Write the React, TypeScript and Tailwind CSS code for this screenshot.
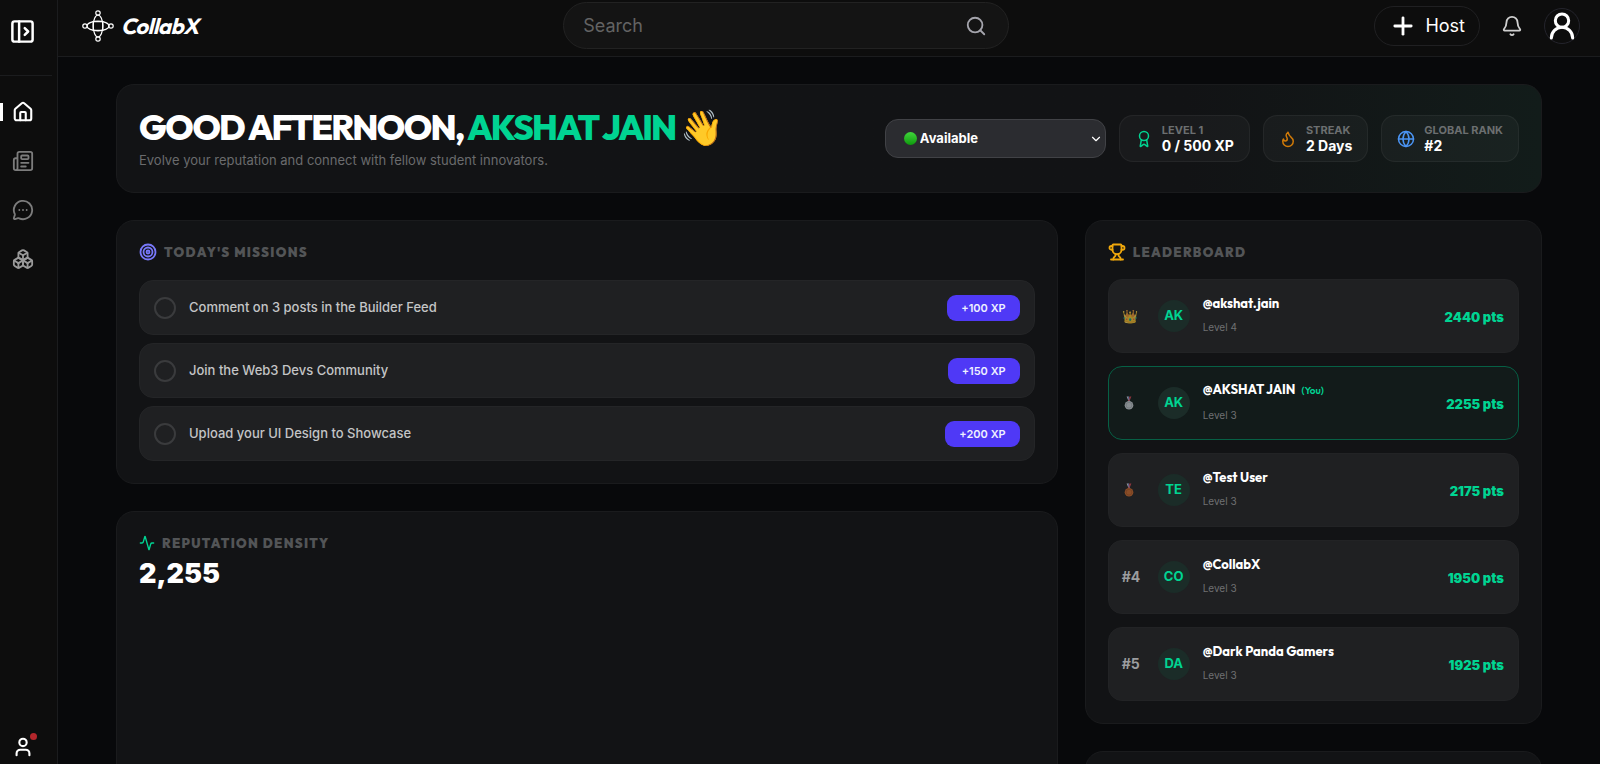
import type { ReactNode } from "react";
import {
  Activity,
  Award,
  Bell,
  Boxes,
  ChevronDown,
  Flame,
  Globe,
  House,
  MessageCircleMore,
  Newspaper,
  PanelLeftOpen,
  Plus,
  Search,
  Target,
  Trophy,
  User,
  UserRound,
} from "lucide-react";

const display = "font-['Outfit','Lato',sans-serif]";

const missions = [
  { id: "comment", title: "Comment on 3 posts in the Builder Feed", xp: 100 },
  { id: "join", title: "Join the Web3 Devs Community", xp: 150 },
  { id: "upload", title: "Upload your UI Design to Showcase", xp: 200 },
];

const leaders = [
  { rank: 1, initials: "AK", name: "akshat.jain", level: 4, points: 2440 },
  { rank: 2, initials: "AK", name: "AKSHAT JAIN", level: 3, points: 2255, you: true },
  { rank: 3, initials: "TE", name: "Test User", level: 3, points: 2175 },
  { rank: 4, initials: "CO", name: "CollabX", level: 3, points: 1950 },
  { rank: 5, initials: "DA", name: "Dark Panda Gamers", level: 3, points: 1925 },
];

function Logo() {
  return (
    <svg viewBox="0 0 32 32" className="size-8" fill="none" stroke="currentColor" strokeWidth="1.2">
      <ellipse cx="16" cy="16" rx="11" ry="4.8" />
      <ellipse cx="16" cy="16" rx="4.8" ry="11" />
      <path d="M11.2 11.7h9.6v8.6h-9.6z" />
      <circle cx="16" cy="3" r="2.2" />
      <circle cx="16" cy="29" r="2.2" />
      <circle cx="3" cy="16" r="2.2" />
      <circle cx="29" cy="16" r="2.2" />
    </svg>
  );
}

function Medal({ color, label }: { color: string; label: string }) {
  return (
    <svg viewBox="0 0 14 14" className="size-[14px] opacity-70" role="img" aria-label={label}>
      <path d="M4.6 0.5h2L8 5.2H6.6z" fill="#c9ccd6" />
      <path d="M9.4 0.5h-2L6 5.2h1.4z" fill="#c5414d" />
      <path d="M5.8 0.5h.8l1 3.2-.4 1.2z" fill="#5c74b8" />
      <circle cx="7" cy="9.2" r="4.3" fill={color} />
      <circle cx="7" cy="9.2" r="2.9" fill="none" stroke="#00000033" strokeWidth="0.7" />
    </svg>
  );
}

function Rank({ rank }: { rank: number }) {
  if (rank === 1) return <span className="text-[13px] opacity-60">👑</span>;
  if (rank === 2) return <Medal color="#b9bec4" label="Silver" />;
  if (rank === 3) return <Medal color="#b8602a" label="Bronze" />;
  return <>#{rank}</>;
}

function Card({ children, className = "" }: { children?: ReactNode; className?: string }) {
  return (
    <section className={`rounded-[18px] border border-[#1a1b1d] bg-[#121315] p-[22px] ${className}`}>
      {children}
    </section>
  );
}

function CardTitle({ icon, children }: { icon: ReactNode; children: ReactNode }) {
  return (
    <h2 className={`flex h-[18px] items-center gap-[7px] text-[13px] leading-5 font-black tracking-widest text-[#535557] uppercase ${display}`}>
      {icon}
      {children}
    </h2>
  );
}

function Stat({ icon, label, value }: { icon: ReactNode; label: string; value: string }) {
  return (
    <div className="flex h-[47px] items-center gap-[9px] rounded-[14px] border border-white/5 bg-white/3 px-[15px]">
      {icon}
      <div>
        <p className="text-[11px] leading-[14px] font-bold text-[#6c6f70]">{label}</p>
        <p className="text-sm leading-[18px] font-bold text-white">{value}</p>
      </div>
    </div>
  );
}

function Sidebar() {
  return (
    <aside className="flex w-[58px] shrink-0 flex-col border-r border-[#1b1c1e] bg-[#0d0d0d]">
      <div className="mr-[5px] flex h-[76px] shrink-0 items-start border-b border-[#1b1c1e] pt-[18px] pl-[9px]">
        <button aria-label="Open sidebar" className="text-white">
          <PanelLeftOpen size={27} strokeWidth={2.2} />
        </button>
      </div>
      <nav className="mt-[27px] flex flex-col gap-[31px]">
        <a href="#home" aria-label="Home" className="flex h-[18px] items-center border-l-3 border-white pl-[9px] text-white">
          <House size={22} strokeWidth={2.3} />
        </a>
        <a href="#feed" aria-label="Feed" className="flex h-[18px] items-center pl-3 text-[#7c7c7c]">
          <Newspaper size={22} />
        </a>
        <a href="#messages" aria-label="Messages" className="flex h-[18px] items-center pl-3 text-[#7c7c7c]">
          <MessageCircleMore size={22} />
        </a>
        <a href="#communities" aria-label="Communities" className="flex h-[18px] items-center pl-3 text-[#9a9a9a]">
          <Boxes size={22} />
        </a>
      </nav>
      <a href="#profile" aria-label="Profile" className="relative mt-auto mb-[6px] ml-3 w-[22px] text-white">
        <User size={22} strokeWidth={2.3} />
        <span className="absolute -top-[3px] -right-[3px] size-[7px] rounded-full bg-[#b3262b]" />
      </a>
    </aside>
  );
}

function TopBar() {
  return (
    <header className="flex h-[57px] shrink-0 items-start justify-between border-b border-[#1b1c1e] bg-[#0d0d0d] pr-5 pl-6">
      <a href="#home" className="flex items-center gap-[7px] pt-[10px] text-white">
        <Logo />
        <span className={`text-[22px] leading-8 font-bold tracking-tight italic ${display}`}>CollabX</span>
      </a>
      <label className="mt-[2px] flex h-[47px] w-[446px] items-center rounded-full border border-[#222] bg-[#141414] pr-[21px] pl-[19px]">
        <input
          type="search"
          placeholder="Search"
          aria-label="Search"
          className="min-w-0 flex-1 bg-transparent text-lg text-white outline-none placeholder:text-[#636363]"
        />
        <Search size={22} className="text-[#a4a4ac]" />
      </label>
      <div className="flex items-center gap-[21px] pt-[6px]">
        <button className="flex h-10 items-center gap-2 rounded-full border border-[#202022] pr-[14px] pl-[14px] text-lg text-white">
          <Plus size={28} strokeWidth={2.4} />
          Host
        </button>
        <button aria-label="Notifications" className="text-[#cfcfcf]">
          <Bell size={22} />
        </button>
        <button
          aria-label="Account"
          className="flex size-9 items-center justify-center rounded-full border border-[#24242c] text-white"
        >
          <UserRound size={32} strokeWidth={2.3} className="shrink-0" />
        </button>
      </div>
    </header>
  );
}

function Greeting() {
  return (
    <Card className="flex items-center justify-between bg-linear-to-r from-[#121315] from-75% to-[#121c1a]">
      <div>
        <h1 className={`text-[35px] leading-[41px] font-extrabold tracking-tighter text-white ${display}`}>
          GOOD AFTERNOON, <span className="text-[#00d492]">AKSHAT JAIN</span> 👋
        </h1>
        <p className="mt-[3px] text-[13px] leading-[19px] text-[#6a6b6d]">
          Evolve your reputation and connect with fellow student innovators.
        </p>
      </div>
      <div className="flex items-center gap-[13px]">
        <div className="relative">
          <select
            aria-label="Status"
            defaultValue="available"
            className="h-[39px] w-[221px] appearance-none rounded-[13px] border border-[#414246] bg-[#2b2c30] pl-[34px] text-[13px] font-bold text-white"
          >
            <option value="available">Available</option>
            <option value="busy">Busy</option>
          </select>
          <span className="pointer-events-none absolute top-[13px] left-[19px] size-[13px] rounded-full bg-linear-to-b from-[#3fd63a] to-[#0a9a0a]" />
          <ChevronDown size={14} className="pointer-events-none absolute top-[13px] right-[3px] text-white" />
        </div>
        <Stat icon={<Award size={18} className="text-[#00d492]" />} label="LEVEL 1" value="0 / 500 XP" />
        <Stat icon={<Flame size={18} className="text-[#d07a08]" />} label="STREAK" value="2 Days" />
        <Stat icon={<Globe size={18} className="text-[#4b95f5]" />} label="GLOBAL RANK" value="#2" />
      </div>
    </Card>
  );
}

function Missions() {
  return (
    <Card>
      <CardTitle icon={<Target size={18} strokeWidth={2.4} className="text-[#7878fa]" />}>Today's Missions</CardTitle>
      <ul className="mt-[19px] space-y-2">
        {missions.map((m) => (
          <li key={m.id} className="flex h-[55px] items-center rounded-[14px] border border-[#242527] bg-[#1f2022] px-[14px]">
            <input
              id={m.id}
              type="checkbox"
              className="size-[22px] appearance-none rounded-full border-2 border-[#3a3b3d]"
            />
            <label htmlFor={m.id} className="ml-[13px] flex-1 text-[13px] font-medium text-[#c4c5c6]">
              {m.title}
            </label>
            <span className="rounded-[9px] bg-[#4f39f6] px-[14px] text-[11px] leading-[26px] font-semibold text-[#eef0ff]">
              +{m.xp} XP
            </span>
          </li>
        ))}
      </ul>
    </Card>
  );
}

function Leaderboard() {
  return (
    <Card>
      <CardTitle icon={<Trophy size={18} strokeWidth={2.4} className="text-[#f0a80c]" />}>Leaderboard</CardTitle>
      <ol className="mt-[18px] space-y-[13px]">
        {leaders.map((l) => (
          <li
            key={l.name}
            className={`flex h-[74px] items-center rounded-[14px] border pr-[14px] pl-[13px] ${
              l.you ? "border-[#066045] bg-[#121b1a]" : "border-[#222325] bg-[#1f2022]"
            }`}
          >
            <span className="w-9 text-sm font-bold text-[#9c9d9f]">
              <Rank rank={l.rank} />
            </span>
            <span className="flex size-8 items-center justify-center rounded-full bg-[#1b2c28] text-[13px] font-bold text-[#00d492]">
              {l.initials}
            </span>
            <div className="ml-[13px] flex-1 pb-1">
              <p className={`text-[13px] leading-5 font-bold text-white ${display}`}>
                @{l.name}
                {l.you && <span className="ml-[6px] text-[10px] font-semibold text-[#00d492]">(You)</span>}
              </p>
              <p className="mt-[6px] text-[10px] leading-4 text-[#6f7072]">Level {l.level}</p>
            </div>
            <span className="pt-[3px] text-[13px] font-black text-[#00d492]">{l.points} pts</span>
          </li>
        ))}
      </ol>
    </Card>
  );
}

export default function App() {
  return (
    <div className="flex h-screen overflow-hidden bg-[#08090b] font-['Inter',sans-serif]">
      <Sidebar />
      <div className="flex min-w-0 flex-1 flex-col">
        <TopBar />
        <main className="min-h-0 flex-1 overflow-hidden px-[58px] pt-[27px]">
          <Greeting />
          <div className="mt-[27px] grid grid-cols-3 items-start gap-[27px]">
            <div className="col-span-2 space-y-[27px]">
              <Missions />
              <Card className="min-h-[400px]">
                <CardTitle icon={<Activity size={16} className="text-[#00d492]" />}>Reputation Density</CardTitle>
                <p className="mt-1 text-[27px] leading-9 font-black text-white">2,255</p>
              </Card>
            </div>
            <div className="space-y-[27px]">
              <Leaderboard />
              <Card className="min-h-[200px]" />
            </div>
          </div>
        </main>
      </div>
    </div>
  );
}
